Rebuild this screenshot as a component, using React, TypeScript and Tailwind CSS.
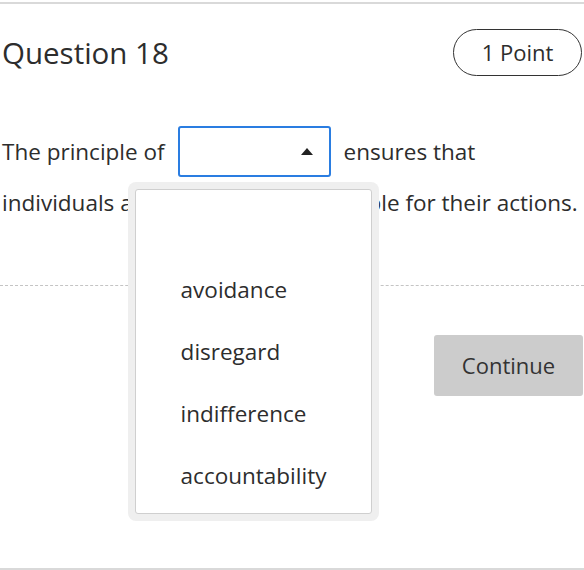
import React from "react";

const options = ["avoidance", "disregard", "indifference", "accountability"];

function Dropdown() {
  return (
    <div className="absolute left-[-52px] top-[54px] z-10 w-[251px] rounded-[8px] bg-[#efefef] p-[7px]">
      <ul className="h-[325px] rounded-[3px] border border-[#cfcfcf] bg-white pt-[82px]">
        {options.map((o) => (
          <li key={o} className="h-[62px] pl-[45px] text-[22.5px] leading-[36px] text-[#2d2d2d]">
            {o}
          </li>
        ))}
      </ul>
    </div>
  );
}

export default function App() {
  return (
    <div
      className="flex h-[570px] w-[584px] flex-col bg-white text-[#2d2d2d]"
      style={{ fontFamily: '"Open Sans", "Liberation Sans", sans-serif' }}
    >
      <div className="mt-[2px] border-t-2 border-[#d9d9d9]" />
      <div className="mt-[25px] flex items-center justify-between pl-[2px] pr-[2px]">
        <h1 className="text-[29.5px] font-medium leading-none">Question 18</h1>
        <span className="flex h-[47px] w-[129px] items-center justify-center rounded-full border border-[#333] text-[22px] font-medium">
          1 Point
        </span>
      </div>

      <div className="mt-[50px] pl-[2px] text-[22.5px]">
        <div className="flex h-[51px] items-center">
          <span>The principle of</span>
          <span className="relative mx-[13px] flex h-[51px] w-[153px] items-center justify-end rounded-[3px] border-2 border-[#2a7de1] pr-[16px]">
            <svg width="12" height="7" viewBox="0 0 12 7">
              <path d="M6 0L12 7H0z" fill="#222" />
            </svg>
            <Dropdown />
          </span>
          <span>ensures that</span>
        </div>
        <p className="whitespace-nowrap leading-[51px]">
          individuals are held solely responsible for their actions.
        </p>
      </div>

      <div className="mt-[57px] border-t border-dashed border-[#c4c4c4]" />

      <div className="mt-[49px] flex justify-end pr-[1px]">
        <button className="h-[61px] w-[149px] rounded-[3px] bg-[#cccccc] text-[22px] text-[#333]">
          Continue
        </button>
      </div>

      <div className="mt-auto border-t-2 border-[#d9d9d9]" />
    </div>
  );
}
